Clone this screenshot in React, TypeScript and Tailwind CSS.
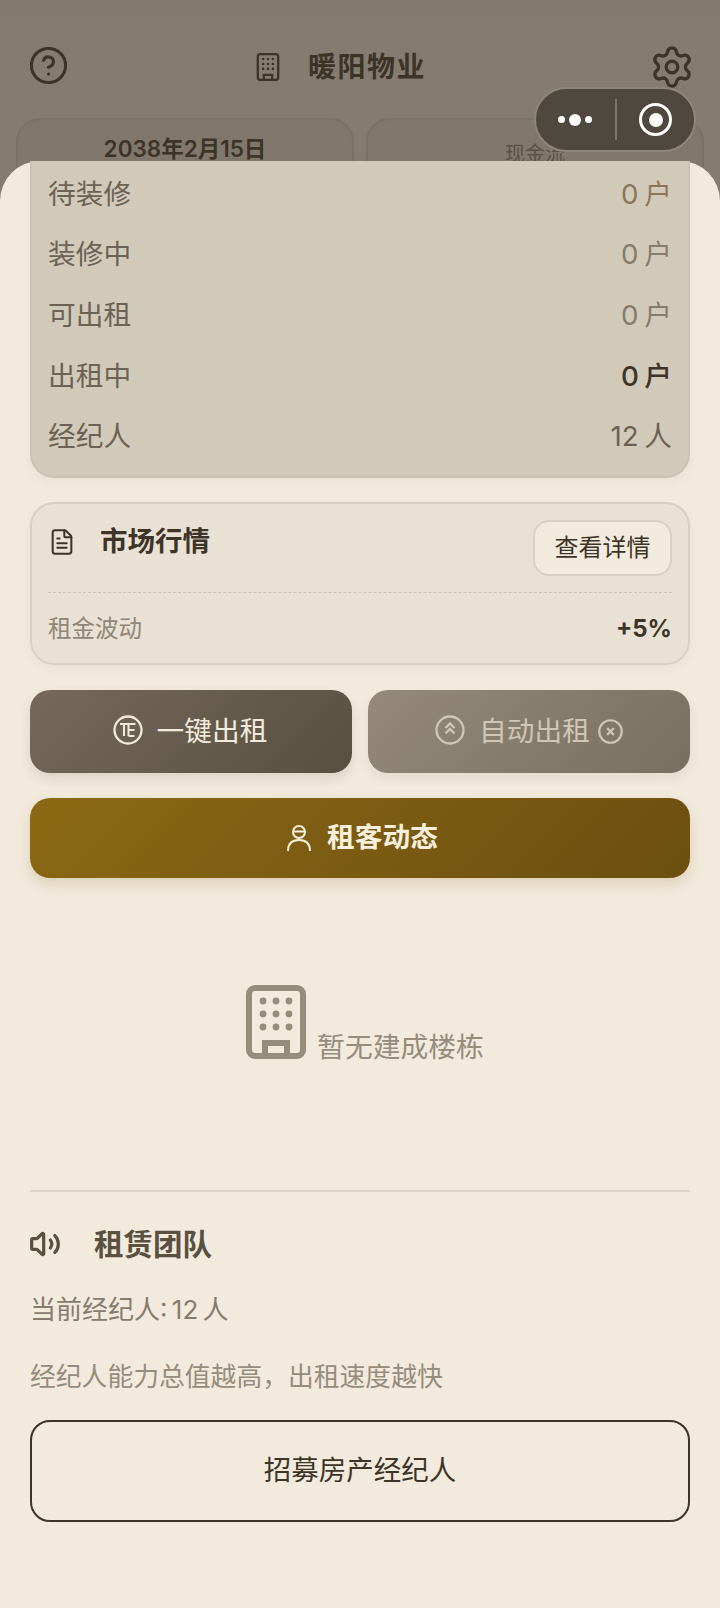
import { CircleHelp, FileText, Settings, Volume2 } from "lucide-react";

const font = { fontFamily: 'Inter, "Noto Sans CJK SC", sans-serif' };

function BuildingIcon({ className, stroke = 5 }: { className: string; stroke?: number }) {
  return (
    <svg viewBox="0 0 60 74" fill="none" className={className}>
      <rect x="3" y="3" width="54" height="68" rx="6" stroke="currentColor" strokeWidth={stroke} />
      {[16, 29, 42].map((y) =>
        [17, 30, 43].map((x) => <circle key={`${x}-${y}`} cx={x} cy={y} r="3.400" fill="currentColor" />),
      )}
      <path d="M19 71V58h22v13" stroke="currentColor" strokeWidth={stroke} />
    </svg>
  );
}

function RentIcon() {
  return (
    <svg viewBox="0 0 30 30" fill="none" stroke="currentColor" strokeWidth="2.300" className="w-[30px] h-[30px]">
      <circle cx="15" cy="15" r="13.500" />
      <path d="M7 9h8.500M11 9v12M15.500 9h7M15.500 9v12M15.500 15h6M15.500 21h6" strokeWidth="2" />
    </svg>
  );
}

function AutoIcon() {
  return (
    <svg viewBox="0 0 30 30" fill="none" stroke="currentColor" strokeWidth="2.300" className="w-[30px] h-[30px]">
      <circle cx="15" cy="15" r="13.500" />
      <path d="M10.500 13 15 8.500l4.500 4.500M10.500 18.500 15 14l4.500 4.500" />
    </svg>
  );
}

function CloseIcon() {
  return (
    <svg viewBox="0 0 26 26" fill="none" stroke="currentColor" strokeWidth="2.300" className="w-[25px] h-[25px]">
      <circle cx="13" cy="13" r="11.700" />
      <path d="m9.500 9.500 7 7M16.500 9.500l-7 7" />
    </svg>
  );
}

function TenantIcon() {
  return (
    <svg viewBox="0 0 26 28" fill="none" stroke="currentColor" strokeWidth="2" className="w-[26px] h-[28px]">
      <circle cx="13" cy="8" r="6" />
      <path d="M8 7.500h10M2 27c0-7 4-11 11-11s11 4 11 11" />
    </svg>
  );
}

const rows = [
  { label: "待装修", value: "0 户", cls: "text-[#8c7658]" },
  { label: "装修中", value: "0 户", cls: "text-[#857c6e]" },
  { label: "可出租", value: "0 户", cls: "text-[#857c6e]" },
  { label: "出租中", value: "0 户", cls: "text-[#3d3428] font-medium" },
  { label: "经纪人", value: "12 人", cls: "text-[#6b6255]" },
];

export default function App() {
  return (
    <div style={font} className="relative w-[720px] h-[1608px] overflow-hidden bg-[#f2eadd] text-[#3d3428]">
      {/* Dimmed page header */}
      <div className="h-[201px] bg-[#847c70]">
        <div className="h-[16px] bg-[#82796d]" />
        <div className="px-4 pt-[30px]">
          <div className="flex items-center justify-between pl-[12px] pr-[9px] h-[42px]">
            <CircleHelp className="w-[41px] h-[41px] -mt-[3px] text-[#3d3428]" strokeWidth={1.800} />
            <div className="flex items-center gap-[28px] -ml-[36px]">
              <BuildingIcon className="w-[24px] h-[28px] text-[#3d3428]" stroke={6} />
              <span className="text-[28px] leading-[42px] font-bold tracking-[1.500px] text-[#3d3428]">暖阳物业</span>
            </div>
            <Settings className="w-[46px] h-[46px] text-[#3d3428]" strokeWidth={1.750} />
          </div>
          <div className="grid grid-cols-2 gap-[12px] mt-[30px]">
            <div className="h-[120px] rounded-[24px] border-2 border-[#7a7266] bg-[#80786c] text-center pt-[12px] text-[22.500px] leading-[34px] font-semibold text-[#3d3428]">
              2038年2月15日
            </div>
            <div className="h-[120px] rounded-[24px] border-2 border-[#7a7266] bg-[#80786c] text-center pt-[20px] text-[20px] leading-[28px] text-[#5a5246]">
              现金流
            </div>
          </div>
        </div>
      </div>

      {/* Menu capsule */}
      <div className="absolute left-[534px] top-[87px] w-[162px] h-[65px] rounded-full border-2 border-[#8d867a] bg-[#4f483f] flex items-center">
        <div className="w-[79px] flex items-center justify-center gap-[4px] pr-[2px]">
          <span className="w-[7px] h-[7px] rounded-full bg-white" />
          <span className="w-[12px] h-[12px] rounded-full bg-white" />
          <span className="w-[7px] h-[7px] rounded-full bg-white" />
        </div>
        <div className="w-[2px] h-[41px] bg-[#7b7468]" />
        <div className="flex-1 flex items-center justify-center">
          <div className="w-[33px] h-[33px] rounded-full border-[3px] border-white flex items-center justify-center">
            <span className="w-[14px] h-[14px] rounded-full bg-white" />
          </div>
        </div>
      </div>

      {/* Sheet */}
      <div className="relative -mt-[40px] h-[1447px] rounded-t-[40px] bg-[#f2eadd] px-[30px]">
        <div className="rounded-b-[24px] bg-[#d2cab9] border-b-2 border-x-2 border-[#cbc3b2] h-[317px] pl-[16px] pr-[16px] pt-[3px] shadow-[0_4px_12px_rgba(61,52,40,0.04)]">
          {rows.map((r) => (
            <div key={r.label} className="flex items-center justify-between h-[60.700px] text-[27.700px]">
              <span className="text-[#6b6255]">{r.label}</span>
              <span className={`${r.cls} [word-spacing:-2px]`}>{r.value}</span>
            </div>
          ))}
        </div>

        <div className="mt-[24px] h-[163px] rounded-[24px] border-2 border-[#d8d0c0] bg-[#e9e1d3] px-[16px] pt-[16px] shadow-[0_4px_12px_rgba(61,52,40,0.04)]">
          <div className="flex justify-between h-[56px]">
            <div className="flex items-start">
              <FileText className="w-[28px] h-[28px] mt-[8px] text-[#3d3428]" strokeWidth={1.750} />
              <span className="ml-[24px] mt-[1px] text-[27.500px] leading-[40px] font-bold">市场行情</span>
            </div>
            <button className="w-[139px] h-[56px] rounded-[16px] border-2 border-[#d8d0c0] bg-[#f2eadd] text-[24px] text-[#3d3428]">
              查看详情
            </button>
          </div>
          <div className="mt-[16px] border-t border-dashed border-[#cbc3b2]" />
          <div className="flex items-center justify-between h-[71px]">
            <span className="text-[23.500px] text-[#8f8677]">租金波动</span>
            <span className="text-[24px] font-bold">+5%</span>
          </div>
        </div>

        <div className="mt-[25px] grid grid-cols-2 gap-[16px]">
          <button className="h-[83px] rounded-[20px] bg-[linear-gradient(135deg,#75695a,#584f40)] flex items-center justify-center gap-[14px] pr-[2px] text-[27.700px] text-[#f2eadd] shadow-[0_6px_12px_rgba(61,52,40,0.12)]">
            <span className="-mt-[3px]">
              <RentIcon />
            </span>
            一键出租
          </button>
          <button className="h-[83px] rounded-[20px] bg-[linear-gradient(135deg,#958a79,#786f60)] flex items-center justify-center gap-[8px] text-[27.700px] text-[#cfc6b6] shadow-[0_6px_12px_rgba(61,52,40,0.08)]">
            <span className="-mt-[4px] mr-[6px]">
              <AutoIcon />
            </span>
            自动出租
            <CloseIcon />
          </button>
        </div>

        <button className="mt-[25px] w-full h-[80px] rounded-[20px] bg-[linear-gradient(135deg,#8b6914,#6b4f10)] flex items-center justify-center gap-[15px] pl-[4px] text-[27.700px] font-bold text-[#f8efdd] shadow-[0_6px_14px_rgba(139,105,20,0.2)]">
          <TenantIcon />
          租客动态
        </button>

        <div className="mt-[107px] flex items-end justify-center gap-[11px] h-[74px] pl-[10px]">
          <BuildingIcon className="w-[60px] h-[74px] text-[#958c7c]" stroke={6} />
          <span className="text-[27.800px] leading-[40px] -mb-[8px] text-[#958c7c]">暂无建成楼栋</span>
        </div>

        <div className="mt-[131px] h-[2px] bg-[#ddd5c7]" />

        <div className="mt-[30px] flex items-center h-[44px]">
          <Volume2 className="w-[32px] h-[32px] -ml-[1px] text-[#5a5040]" strokeWidth={2.400} />
          <span className="ml-[33px] text-[29.500px] font-bold text-[#5a5040]">租赁团队</span>
        </div>
        <div className="mt-[26px] text-[26px] leading-[36px] text-[#857c6e] [word-spacing:-3px]">当前经纪人: 12 人</div>
        <div className="mt-[31px] text-[25.800px] leading-[36px] text-[#958c7c]">经纪人能力总值越高，出租速度越快</div>
        <button className="mt-[25px] w-full h-[102px] rounded-[20px] border-2 border-[#3d3428] text-[27.500px] text-[#3d3428]">
          招募房产经纪人
        </button>
      </div>
    </div>
  );
}
